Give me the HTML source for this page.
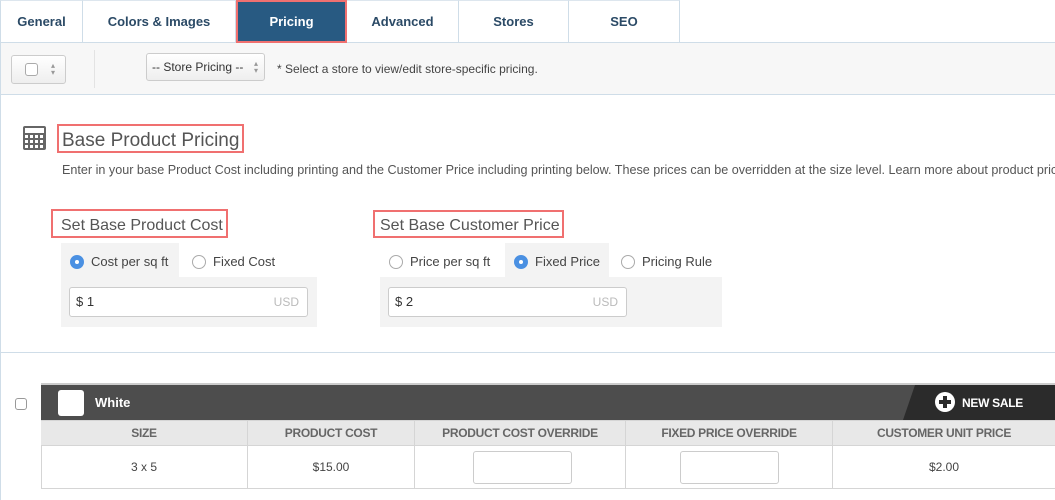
<!DOCTYPE html>
<html><head><style>
*{box-sizing:border-box;margin:0;padding:0}
body{width:1055px;height:500px;overflow:hidden;background:#fff;font-family:"Liberation Sans",sans-serif;position:relative;color:#555}
.a{position:absolute}
.tab{position:absolute;top:0;height:43px;border-right:1px solid #cfdde8;border-top:1px solid #dde6ee;font-weight:bold;font-size:13px;color:#2b4a66;text-align:center;line-height:42px}
.radio{position:absolute;width:14px;height:14px;border-radius:50%;border:1px solid #aaa;background:#fff}
.radio.on{background:#4a90e2;border-color:#4a90e2}
.radio.on:after{content:"";position:absolute;left:4px;top:4px;width:4px;height:4px;border-radius:50%;background:#fff}
.lbl{position:absolute;font-size:13px;color:#444}
.inp{position:absolute;height:30px;background:#fff;border:1px solid #ccc;border-radius:3px;font-size:13px;color:#333;line-height:28px;padding-left:6px}
.inp span{position:absolute;right:8px;color:#bbb;font-size:12px}
.red{position:absolute;border:2px solid #f07070}
.th{position:absolute;top:421px;height:25px;line-height:25px;text-align:center;font-size:12px;font-weight:bold;color:#666;border-right:1px solid #d5d5d5;letter-spacing:-0.3px}
.td{position:absolute;top:446px;height:42px;line-height:42px;text-align:center;font-size:12px;color:#444;border-right:1px solid #d5d5d5}
</style></head><body>
<div class="a" style="left:0;top:42px;width:1055px;height:1px;background:#cfdde8"></div>
<div class="a" style="left:0;top:43px;width:1px;height:457px;background:#cfdde8"></div>
<div class="tab" style="left:0;width:83px;border-left:1px solid #cfdde8">General</div>
<div class="tab" style="left:83px;width:153px">Colors &amp; Images</div>
<div class="tab" style="left:236px;width:111px;background:#285a82;color:#fff;border:2px solid #f07070;line-height:40px">Pricing</div>
<div class="tab" style="left:347px;width:112px">Advanced</div>
<div class="tab" style="left:459px;width:110px">Stores</div>
<div class="tab" style="left:569px;width:111px">SEO</div>
<div class="a" style="left:1px;top:43px;width:1054px;height:52px;background:#f7f7f7;border-bottom:1px solid #cfdde8"></div>
<div class="a" style="left:11px;top:55px;width:55px;height:29px;border:1px solid #ccc;border-radius:3px;background:linear-gradient(#fff,#eee)"></div>
<div class="a" style="left:25px;top:63px;width:13px;height:13px;border:1px solid #aaa;border-radius:3px;background:#fff"></div>
<div class="a" style="left:51px;top:62px;font-size:8px;color:#999;line-height:7px">▴<br>▾</div>
<div class="a" style="left:94px;top:50px;width:1px;height:38px;background:#e3e3e3"></div>
<div class="a" style="left:146px;top:53px;width:119px;height:28px;border:1px solid #ccc;border-radius:3px;background:linear-gradient(#fff,#eee);font-size:12px;color:#333;line-height:26px;padding-left:5px">-- Store Pricing --</div>
<div class="a" style="left:254px;top:60px;font-size:8px;color:#999;line-height:7px">▴<br>▾</div>
<div class="a" style="left:277px;top:62px;font-size:12px;color:#444">* Select a store to view/edit store-specific pricing.</div>

<svg class="a" style="left:23px;top:126px" width="23" height="24" viewBox="0 0 23 24"><rect x="0" y="0" width="23" height="24" rx="2" fill="#666"/><rect x="2" y="2" width="19" height="5" fill="#fff"/><g fill="#fff"><rect x="2" y="9" width="3" height="3"/><rect x="7" y="9" width="3" height="3"/><rect x="12" y="9" width="3" height="3"/><rect x="17" y="9" width="3" height="3"/><rect x="2" y="14" width="3" height="3"/><rect x="7" y="14" width="3" height="3"/><rect x="12" y="14" width="3" height="3"/><rect x="17" y="14" width="3" height="3"/><rect x="2" y="19" width="3" height="3"/><rect x="7" y="19" width="3" height="3"/><rect x="12" y="19" width="3" height="3"/><rect x="17" y="19" width="3" height="3"/></g></svg>
<div class="red" style="left:57px;top:124px;width:187px;height:29px"></div>
<div class="a" style="left:62px;top:130px;font-size:19px;color:#555">Base Product Pricing</div>
<div class="a" style="left:62px;top:163px;font-size:12.6px;color:#555;white-space:nowrap">Enter in your base Product Cost including printing and the Customer Price including printing below. These prices can be overridden at the size level. Learn more about product pricing</div>

<div class="red" style="left:51px;top:209px;width:177px;height:29px"></div>
<div class="a" style="left:61px;top:217px;font-size:16px;color:#555">Set Base Product Cost</div>
<div class="a" style="left:61px;top:243px;width:118px;height:35px;background:#f3f3f3"></div>
<div class="a" style="left:61px;top:277px;width:256px;height:50px;background:#f3f3f3"></div>
<div class="radio on" style="left:70px;top:255px"></div><div class="lbl" style="left:91px;top:254px">Cost per sq ft</div>
<div class="radio" style="left:192px;top:255px"></div><div class="lbl" style="left:213px;top:254px">Fixed Cost</div>
<div class="inp" style="left:69px;top:287px;width:239px">$ 1<span>USD</span></div>

<div class="red" style="left:373px;top:210px;width:191px;height:28px"></div>
<div class="a" style="left:380px;top:217px;font-size:16px;color:#555">Set Base Customer Price</div>
<div class="a" style="left:505px;top:243px;width:104px;height:35px;background:#f3f3f3"></div>
<div class="a" style="left:380px;top:277px;width:342px;height:50px;background:#f3f3f3"></div>
<div class="radio" style="left:389px;top:255px"></div><div class="lbl" style="left:410px;top:254px">Price per sq ft</div>
<div class="radio on" style="left:514px;top:255px"></div><div class="lbl" style="left:535px;top:254px">Fixed Price</div>
<div class="radio" style="left:621px;top:255px"></div><div class="lbl" style="left:642px;top:254px">Pricing Rule</div>
<div class="inp" style="left:388px;top:287px;width:239px">$ 2<span>USD</span></div>

<div class="a" style="left:0;top:352px;width:1055px;height:1px;background:#cfdde8"></div>

<div class="a" style="left:15px;top:398px;width:12px;height:12px;border:1px solid #999;border-radius:3px"></div>
<div class="a" style="left:41px;top:383px;width:1014px;height:37px;background:#4d4d4d;border-top:2px solid #ccc"></div>
<svg class="a" style="left:903px;top:385px" width="152" height="35"><polygon points="12,0 152,0 152,35 0,35" fill="#2b2b2b"/><circle cx="42" cy="17" r="10" fill="#fff"/><rect x="40" y="11" width="4" height="12" fill="#2b2b2b"/><rect x="36" y="15" width="12" height="4" fill="#2b2b2b"/></svg>
<div class="a" style="left:962px;top:396px;font-size:12px;font-weight:bold;color:#fff;letter-spacing:-0.3px">NEW SALE</div>
<div class="a" style="left:58px;top:390px;width:26px;height:26px;background:#fff;border-radius:3px"></div>
<div class="a" style="left:95px;top:395px;font-size:13px;font-weight:bold;color:#fff">White</div>
<div class="a" style="left:41px;top:420px;width:1014px;height:69px;border:1px solid #d5d5d5;border-right:none"></div>
<div class="a" style="left:41px;top:421px;width:1014px;height:25px;background:#e8e8e8;border-bottom:1px solid #d5d5d5"></div>
<div class="th" style="left:41px;width:207px">SIZE</div>
<div class="th" style="left:248px;width:167px">PRODUCT COST</div>
<div class="th" style="left:415px;width:211px">PRODUCT COST OVERRIDE</div>
<div class="th" style="left:626px;width:207px">FIXED PRICE OVERRIDE</div>
<div class="th" style="left:833px;width:222px;border:none">CUSTOMER UNIT PRICE</div>
<div class="td" style="left:41px;width:207px">3 x 5</div>
<div class="td" style="left:248px;width:167px">$15.00</div>
<div class="td" style="left:415px;width:211px"></div>
<div class="td" style="left:626px;width:207px"></div>
<div class="td" style="left:833px;width:222px;border:none">$2.00</div>
<div class="a" style="left:473px;top:451px;width:99px;height:33px;border:1px solid #ccc;border-radius:3px;background:#fff"></div>
<div class="a" style="left:680px;top:451px;width:99px;height:33px;border:1px solid #ccc;border-radius:3px;background:#fff"></div>
</body></html>
